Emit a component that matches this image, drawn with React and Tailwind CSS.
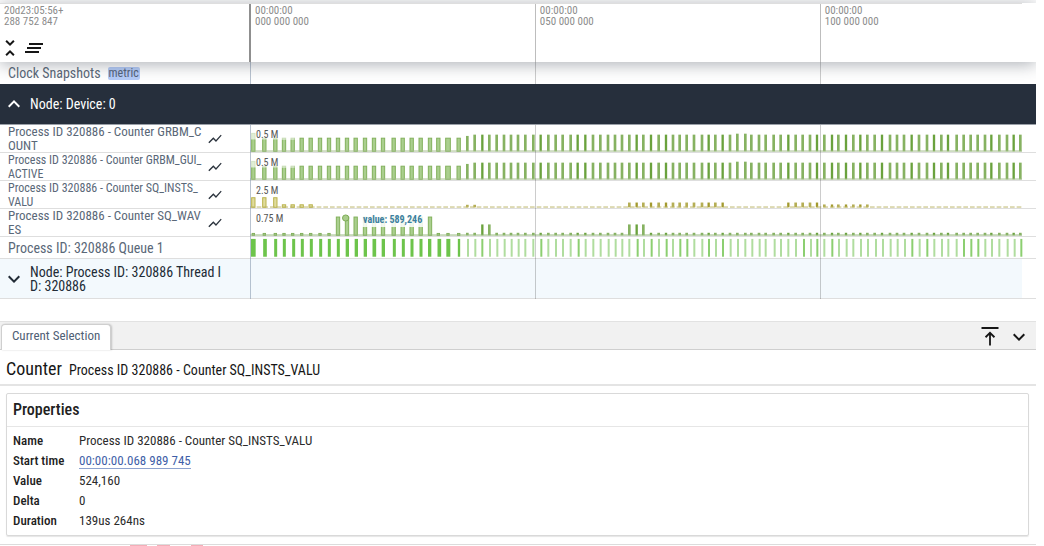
import React from "react";

const FONT =
  "font-['Roboto_Condensed','Liberation_Sans_Narrow',Roboto,sans-serif]";

// Chart coordinates: three units per pixel, origin at the left edge of the timeline.
const WIDE = [
  10, 43, 76, 102, 128, 155, 182, 210, 237, 264, 291, 317, 345, 372, 399, 431,
  458, 485, 512, 540, 565, 594, 626,
];
const THIN = [
  652, 674, 697, 718, 740, 762, 783, 804, 826, 850, 872, 895, 917, 938, 962,
  983, 1006, 1029, 1051, 1074, 1095, 1116, 1138, 1160, 1180, 1203, 1226, 1248,
  1269, 1289, 1310, 1332, 1356, 1376, 1396, 1418, 1440, 1462, 1486, 1504, 1527,
  1547, 1571, 1592, 1615, 1637, 1658, 1680, 1701, 1723, 1746, 1765, 1788, 1810,
  1831, 1852, 1874, 1896, 1920, 1941, 1962, 1985, 2007, 2031, 2052, 2074, 2094,
  2120, 2141, 2162, 2183, 2205, 2224, 2248, 2271, 2291, 2311,
];
const STRONG = new Set([
  697, 872, 983, 1006, 1160, 1203, 1248, 1376, 1418, 1615, 1701, 1746, 1788,
  1831, 1896, 1985, 2052, 2094, 2224, 2291,
]);
const QUEUE_WIDE = [
  [10, 14], [45, 11], [77, 9], [103, 9], [131, 9], [157, 9], [184, 9],
  [212, 9], [238, 9], [265, 9], [292, 10], [319, 10], [346, 10], [373, 11],
  [400, 10], [433, 9], [460, 9], [486, 9], [513, 9], [539, 10], [568, 11],
  [595, 12], [627, 7],
];
const QUEUE_THIN = [
  654, 676, 697, 720, 742, 764, 785, 806, 826, 850, 874, 895, 918, 939, 962,
  986, 1007, 1030, 1052, 1076, 1097, 1117, 1138, 1163, 1182, 1205, 1227, 1250,
  1269, 1291, 1312, 1333, 1357, 1377, 1398, 1419, 1442, 1464, 1486, 1507, 1529,
  1547, 1574, 1593, 1615, 1638, 1662, 1683, 1702, 1723, 1747, 1767, 1790, 1810,
  1833, 1854, 1878, 1899, 1922, 1943, 1965, 1987, 2009, 2032, 2053, 2076, 2095,
  2120, 2142, 2164, 2185, 2206, 2226, 2248, 2273, 2294, 2314,
];
const QUEUE_STRONG = new Set([
  697, 874, 986, 1163, 1205, 1250, 1291, 1312, 1377, 1419, 1662, 1702, 1747,
  1987, 2032, 2142, 2164, 2185, 2314,
]);

function Icon({ d, size = 24 }) {
  return (
    <svg width={size} height={size} viewBox="0 0 24 24" fill="currentColor" aria-hidden="true">
      <path d={d} />
    </svg>
  );
}
const UNFOLD_LESS =
  "M7.41 18.59L8.83 20 12 16.83 15.17 20l1.41-1.41L12 14l-4.59 4.59zm9.18-13.18L15.17 4 12 7.17 8.83 4 7.41 5.41 12 10l4.59-4.59z";
const CLEAR_ALL = "M5 13h14v-2H5v2zm-2 4h14v-2H3v2zM7 7v2h14V7H7z";
const SHOW_CHART =
  "M3.5 18.49l6-6.01 4 4L22 6.92l-1.41-1.41-7.09 7.97-4-4L2 16.99z";
const EXPAND_MORE = "M16.59 8.59L12 13.17 7.41 8.59 6 10l6 6 6-6z";
const EXPAND_LESS = "M12 8l-6 6 1.41 1.41L12 10.83l4.59 4.58L18 14z";
const ALIGN_TOP =
  "M3.5 2v2h17V2zM11.1 20.5V10L8.2 12.9 6.9 11.6 12 6.5l5.1 5.1-1.3 1.3L12.9 10v10.5z";

function Chart({ units, children }) {
  return (
    <svg
      className="block h-full w-full"
      viewBox={"0 0 2358 " + units}
      preserveAspectRatio="none"
      aria-hidden="true"
    >
      {children}
    </svg>
  );
}

function WideBar({ x, h, w = 13, stroke = "#82b05b", fill = "#aacf8e" }) {
  return (
    <rect x={x - w / 2 + 1.5} y={82 - h} width={w - 3} height={h} fill={fill} stroke={stroke} strokeWidth="3" />
  );
}

function ThinBar({ x, h, fill }) {
  const strong = STRONG.has(x);
  return (
    <rect
      x={x - (strong ? 3.5 : 4)}
      y={82 - h}
      width={strong ? 7 : 8}
      height={h}
      fill={fill || (strong ? "#6aa23d" : "#86b261")}
    />
  );
}

function Baseline({ color, dash }) {
  return (
    <line x1="0" x2="2316" y1="81" y2="81" stroke={color} strokeWidth="3" strokeDasharray={dash} />
  );
}

function BusyChart() {
  return (
    <Chart units={84}>
      {WIDE.map((x, i) => (
        <WideBar key={x} x={x} h={i === 0 ? 56 : 41} w={x === 594 ? 17 : 13} />
      ))}
      {THIN.map((x) => (
        <ThinBar key={x} x={x} h={x === 652 ? 48 : x === 1462 || x === 1486 ? 55 : 52} />
      ))}
      <Baseline color="#a3bd8c" />
      <rect x="0" y="14" width="84" height="31" fill="#fff" fillOpacity="0.65" />
      <rect x="84" y="26" width="50" height="20" fill="#fff" fillOpacity="0.55" />
    </Chart>
  );
}

function valuHeight(x) {
  if (x === 652 || x === 674) return 8;
  if (x >= 1138 && x <= 1418) return 15;
  if (x >= 1615 && x <= 1701) return 15;
  if (x >= 1723 && x <= 1852) return 9;
  return 0;
}

function ValuChart() {
  return (
    <Chart units={84}>
      {WIDE.slice(0, 7).map((x, i) => (
        <WideBar key={x} x={x} h={i < 3 ? 30 : 8} stroke="#bab34c" fill="#dfdb9c" />
      ))}
      {THIN.map((x) => (
        <ThinBar key={x} x={x} h={valuHeight(x)} fill={STRONG.has(x) ? "#a39a2f" : "#b5ae55"} />
      ))}
      <Baseline color="#bdb76a" dash="14 6" />
    </Chart>
  );
}

function WavesChart() {
  return (
    <Chart units={84}>
      {WIDE.map((x, i) => (
        <WideBar key={x} x={x} h={i >= 9 && i <= 19 ? 57 : 6} w={i >= 9 && i <= 19 ? 13 : 10} />
      ))}
      {THIN.map((x) => (
        <ThinBar
          key={x}
          x={x}
          h={[697, 718, 1138, 1160, 1180].includes(x) ? 34 : 8}
        />
      ))}
      <Baseline color="#93b67a" />
      <circle cx="287" cy="28" r="9.5" fill="#a9cd8b" stroke="#7cab55" strokeWidth="3" />
    </Chart>
  );
}

function QueueChart() {
  return (
    <Chart units={66}>
      {QUEUE_WIDE.map(([x, w]) => (
        <rect key={x} x={x - w / 2} y="6" width={w} height="56" fill="#6dc44b" />
      ))}
      {QUEUE_THIN.map((x) => (
        <rect key={x} x={x - 3} y="6" width="6" height="56" fill={QUEUE_STRONG.has(x) ? "#8ccf71" : "#b0dd9f"} />
      ))}
    </Chart>
  );
}

const COUNTERS = [
  { lines: ["Process ID 320886 - Counter GRBM_C", "OUNT"], size: "text-[13px]", scale: "0.5 M", chart: <BusyChart /> },
  { lines: ["Process ID 320886 - Counter GRBM_GUI_", "ACTIVE"], size: "text-xs", scale: "0.5 M", chart: <BusyChart /> },
  { lines: ["Process ID 320886 - Counter SQ_INSTS_", "VALU"], size: "text-xs", scale: "2.5 M", chart: <ValuChart /> },
  { lines: ["Process ID 320886 - Counter SQ_WAV", "ES"], size: "text-[13px]", scale: "0.75 M", chart: <WavesChart />, tip: "value: 589,246" },
];

function CounterRow({ lines, size, scale, chart, tip }) {
  return (
    <div className="flex h-7 border-b border-[#dedede]">
      <div className="flex w-[250px] shrink-0 items-center justify-between pl-2 pr-[27px] text-[#5a6878]">
        <span className={"w-[195px] whitespace-nowrap leading-[14px]! " + size}>
          {lines[0]}
          <br />
          {lines[1]}
        </span>
        <button type="button" aria-label="Chart options" className="text-[#2b333d]">
          <Icon d={SHOW_CHART} size={16} />
        </button>
      </div>
      <div className="relative min-w-0 flex-1">
        {chart}
        <span className="absolute left-[6px] top-1 text-[10px] leading-3 text-[#555]">{scale}</span>
        {tip && (
          <span className="absolute left-[14%] top-1 bg-white/85 px-[3px] text-[10px] font-bold leading-[14px] text-[#3c7f9e]">
            {tip}
          </span>
        )}
      </div>
    </div>
  );
}

function Tick({ className, a, b }) {
  return (
    <div className={"absolute inset-y-0 pl-1 pt-px text-[11px] leading-[11px] text-[#8c8c8c] " + className}>
      <span className="block">{a}</span>
      <span className="block">{b}</span>
    </div>
  );
}

const PROPERTIES = [
  ["Name", "Process ID 320886 - Counter SQ_INSTS_VALU"],
  ["Start time", "00:00:00.068 989 745"],
  ["Value", "524,160"],
  ["Delta", "0"],
  ["Duration", "139us 264ns"],
];

export default function App() {
  return (
    <div className={"mr-2 overflow-hidden bg-white pt-[3px] " + FONT}>
      <header className="relative z-20 flex h-[59px] bg-white shadow-[0_2px_16px_rgba(40,50,65,0.4)]">
        <div className="flex w-[250px] shrink-0 flex-col justify-between border-t border-[#dedede] pl-1 pt-px">
          <div className="text-[11px] leading-[11px] text-[#8c8c8c]">
            <span className="block">20d23:05:56+</span>
            <span className="block">288 752 847</span>
          </div>
          <div className="flex pb-[2px] text-[#161616]">
            <button type="button" aria-label="Collapse all" className="-ml-[6px]"><Icon d={UNFOLD_LESS} /></button>
            <button type="button" aria-label="Clear all"><Icon d={CLEAR_ALL} /></button>
          </div>
        </div>
        <div className="relative mr-[14px] flex-1 border-t border-[#dedede]">
          <Tick className="-left-[1px] border-l-2 border-[#8f8f8f]" a="00:00:00" b="000 000 000" />
          <Tick className="left-[36.9%] border-l border-[#bdbdbd]" a="00:00:00" b="050 000 000" />
          <Tick className="left-[73.8%] border-l border-[#bdbdbd]" a="00:00:00" b="100 000 000" />
        </div>
      </header>

      <main className="relative">
        <div className="flex h-[22px] items-center gap-[7px] pl-2">
          <span className="text-sm leading-4 text-[#5a6878]">Clock Snapshots</span>
          <span className="rounded-xs bg-[#b5cbf7] px-px text-xs leading-[13px] text-[#53627a]">metric</span>
        </div>
        <div className="relative z-30 flex h-[41px] items-center gap-1 border-b border-[#9aa0a8] bg-[#262f3c] pl-[2px] text-sm text-white">
          <button type="button" aria-label="Collapse group"><Icon d={EXPAND_LESS} /></button>
          <span>Node: Device: 0</span>
        </div>
        {COUNTERS.map((c) => (
          <CounterRow key={c.lines[0]} {...c} />
        ))}
        <div className="flex h-[22px] border-b border-[#dedede]">
          <div className="w-[250px] shrink-0 pl-2 text-sm leading-[22px] text-[#5a6878]">
            Process ID: 320886 Queue 1
          </div>
          <div className="min-w-0 flex-1"><QueueChart /></div>
        </div>
        <div className="h-10 border-b border-[#dedede] pr-[14px]">
          <div className="flex h-full items-center gap-1 bg-[#f3f9fd] pl-[2px] text-sm leading-[14px] text-[#212b36]">
            <button type="button" aria-label="Expand group"><Icon d={EXPAND_MORE} /></button>
            <span>
              Node: Process ID: 320886 Thread I
              <br />
              D: 320886
            </span>
          </div>
        </div>
        <div className="pointer-events-none absolute inset-y-0 left-[250px] right-[14px]">
          <div className="absolute inset-y-0 left-0 w-px bg-[#8b9bb0]/60" />
          <div className="absolute inset-y-0 left-[36.9%] w-px bg-black/20" />
          <div className="absolute inset-y-0 left-[73.8%] w-px bg-black/20" />
        </div>
      </main>

      <section className="mt-[22px]">
        <div className="flex h-[29px] justify-between border-b border-t border-b-[#cfcfcf] border-t-[#e2e2e2] bg-[#f1f1f1] pl-px pt-[2px]">
          <button type="button" className="-mb-px flex items-start rounded-t border border-b-0 border-[#cfcfcf] bg-white px-[10px] text-[13px] leading-[22px] text-[#4f6075] shadow-[1px_0_2px_rgba(0,0,0,0.2)]">
            Current Selection
          </button>
          <div className="flex items-center gap-[5px] pr-[5px] text-[#161616]">
            <button type="button" aria-label="Open panel fully"><Icon d={ALIGN_TOP} /></button>
            <button type="button" aria-label="Close panel"><Icon d={EXPAND_MORE} /></button>
          </div>
        </div>
        <h1 className="flex h-9 items-baseline gap-[7px] border-b-2 border-[#e4e4e4] pl-[6px] pt-[7px] text-[#161616]">
          <span className="text-lg leading-6">Counter</span>
          <span className="text-sm leading-6">Process ID 320886 - Counter SQ_INSTS_VALU</span>
        </h1>
        <div className="ml-[6px] mr-[7px] mt-[7px] rounded-xs border border-[#d9d9d9] pb-1 shadow-[0_1px_1px_rgba(0,0,0,0.1)]">
          <h2 className="border-b border-[#e6e6e6] pl-[6px] text-base font-medium leading-8 text-[#212121]">Properties</h2>
          <table className="mt-1 text-[13px] leading-5 text-[#2b2b2b]">
            <tbody>
              {PROPERTIES.map(([k, v]) => (
                <tr key={k}>
                  <th scope="row" className="w-[72px] py-0 pl-[6px] text-left font-medium text-[#212121]">{k}</th>
                  <td className="p-0">
                    {k === "Start time" ? (
                      <a href="#start" className="border-b border-[#8da2cf] text-[#3f5fa8]">{v}</a>
                    ) : (
                      v
                    )}
                  </td>
                </tr>
              ))}
            </tbody>
          </table>
        </div>
        <div className="mt-2 flex border-t border-[#dcdcdc] pl-[130px]">
          <span className="h-px w-[17px] bg-[#f4aeb8]" />
          <span className="ml-[10px] h-px w-[13px] bg-[#f4aeb8]" />
          <span className="ml-[21px] h-px w-[12px] bg-[#f4aeb8]" />
        </div>
      </section>
    </div>
  );
}
